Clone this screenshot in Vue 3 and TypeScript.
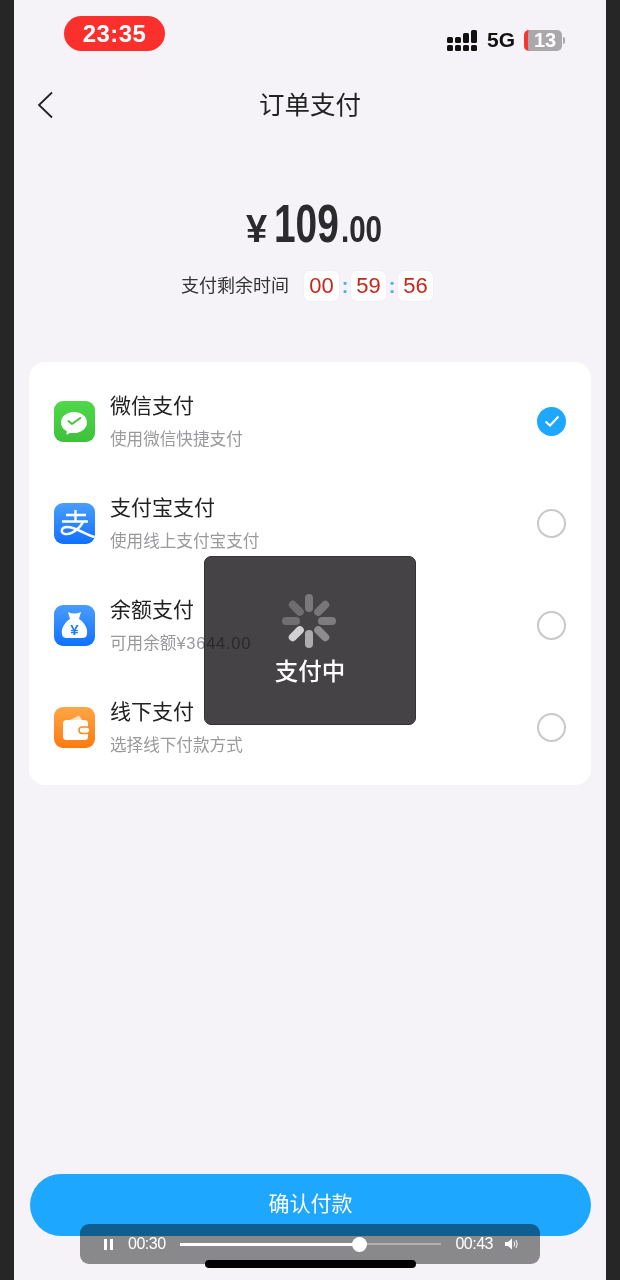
<script setup lang="ts">
const spokes = [
  { angle: 0, color: '#7a787a' },
  { angle: 45, color: '#787678' },
  { angle: 90, color: '#7e7c7e' },
  { angle: 135, color: '#8e8c8e' },
  { angle: 180, color: '#aeacae' },
  { angle: 225, color: '#d2d0d2' },
  { angle: 270, color: '#716f71' },
  { angle: 315, color: '#6f6d6f' },
];

const methods = [
  { key: 'wechat', name: '微信支付', desc: '使用微信快捷支付', extra: '', checked: true },
  { key: 'alipay', name: '支付宝支付', desc: '使用线上支付宝支付', extra: '', checked: false },
  { key: 'balance', name: '余额支付', desc: '可用余额', extra: '¥3644.00', checked: false },
  { key: 'offline', name: '线下支付', desc: '选择线下付款方式', extra: '', checked: false },
];
</script>

<template>
  <div class="frame">
    <div class="status">
      <div class="clock">23:35</div>
      <div class="status-right">
        <svg class="signal" width="30" height="21" viewBox="0 0 30 21">
          <rect x="0" y="7" width="6" height="6" rx="1.500" />
          <rect x="0" y="15" width="6" height="6" rx="1.500" />
          <rect x="8" y="7" width="6" height="6" rx="1.500" />
          <rect x="8" y="15" width="6" height="6" rx="1.500" />
          <rect x="16" y="3" width="6" height="10" rx="1.500" />
          <rect x="16" y="15" width="6" height="6" rx="1.500" />
          <rect x="24" y="0" width="6" height="13" rx="1.500" />
          <rect x="24" y="15" width="6" height="6" rx="1.500" />
        </svg>
        <span class="net">5G</span>
        <div class="battery">
          <div class="battery-body">13</div>
          <i class="battery-nub"></i>
        </div>
      </div>
    </div>

    <div class="nav">
      <svg class="back" width="16" height="28" viewBox="0 0 16 28">
        <path d="M15 1.500 2 14l13 12.500" fill="none" stroke="#222" stroke-width="1.800" />
      </svg>
      <h1>订单支付</h1>
    </div>

    <div class="amount">
      <span class="yen">¥</span><span class="whole">109</span><span class="cents">.00</span>
    </div>

    <div class="countdown">
      <span class="countdown-label">支付剩余时间</span>
      <span class="cell">00</span>
      <span class="colon">:</span>
      <span class="cell">59</span>
      <span class="colon">:</span>
      <span class="cell">56</span>
    </div>

    <div class="card">
      <div v-for="m in methods" :key="m.key" class="row">
        <div class="pay-icon" :class="m.key">
          <svg v-if="m.key === 'wechat'" width="41" height="41" viewBox="0 0 41 41">
            <ellipse cx="20" cy="21.500" rx="13" ry="10.500" fill="#fff" />
            <path d="M13 28 12.500 34l6.500-4z" fill="#fff" />
            <path d="M14 19.500l4 3.500 9-6.500" fill="none" stroke="#41c83d" stroke-width="2" />
          </svg>
          <svg v-else-if="m.key === 'alipay'" width="41" height="41" viewBox="0 0 41 41">
            <g fill="none" stroke="#fff" stroke-width="2.400">
              <path d="M12 12H32M21.500 7V19M8 18.500H34" />
              <path d="M29 19C25 27 16 32 11 31 6 30 7 24 13 24 22 24 32 32 41 34" />
            </g>
          </svg>
          <svg v-else-if="m.key === 'balance'" width="41" height="41" viewBox="0 0 41 41">
            <path d="M14 7Q20 10 27 7L25 14C31 18 34 24 33 29Q33 33 28 33H13Q8 33 8 29C7 24 10 18 16 14Z" fill="#fff" />
            <text x="20.500" y="30" text-anchor="middle" class="bag-yen">¥</text>
          </svg>
          <svg v-else width="41" height="41" viewBox="0 0 41 41">
            <path d="M16 13 25 8.500 28 13Z" fill="#ffe3c4" />
            <rect x="9" y="13" width="25" height="20" rx="3.500" fill="#fff" />
            <rect x="25" y="20" width="11" height="6.500" rx="3.200" fill="#fff" stroke="#ff8a24" stroke-width="1.500" />
          </svg>
        </div>
        <div class="row-text">
          <div class="row-name">{{ m.name }}</div>
          <div class="row-desc">{{ m.desc }}<span v-if="m.extra" class="row-extra">{{ m.extra }}</span></div>
        </div>
        <div class="radio" :class="{ checked: m.checked }">
          <svg v-if="m.checked" width="28" height="28" viewBox="0 0 28 28">
            <path d="M7.500 14.500l4.500 4 8.500-9" fill="none" stroke="#fff" stroke-width="2" />
          </svg>
        </div>
      </div>
    </div>

    <div class="footer">
      <button class="confirm">确认付款</button>
    </div>

    <div class="toast">
      <div class="spinner">
        <i
          v-for="s in spokes"
          :key="s.angle"
          :style="{ transform: `rotate(${s.angle}deg)`, '--spoke': s.color }"
        ></i>
      </div>
      <div class="toast-text">支付中</div>
    </div>

    <div class="player">
      <svg width="9" height="11" viewBox="0 0 9 11" fill="#fff">
        <rect x="0" y="0" width="3" height="11" />
        <rect x="6" y="0" width="3" height="11" />
      </svg>
      <span class="time">00:30</span>
      <div class="track">
        <div class="track-fill"></div>
        <div class="track-knob"></div>
      </div>
      <span class="time">00:43</span>
      <svg width="14" height="12" viewBox="0 0 14 12">
        <path d="M0 4h3l4-3.500v11L3 8H0z" fill="#fff" />
        <path d="M9 3.500q1.500 2.500 0 5M11 2q2.500 4 0 8" fill="none" stroke="#fff" stroke-width="1" />
      </svg>
    </div>

    <div class="home-bar"></div>
  </div>
</template>

<style scoped>
.frame {
  position: relative;
  box-sizing: border-box;
  width: 592px;
  height: 1280px;
  margin: 0 14px;
  background: #f5f3f7;
  display: flex;
  flex-direction: column;
  font-family: "Liberation Sans", "Noto Sans CJK SC", sans-serif;
  color: #222;
}

.status {
  height: 70px;
  box-sizing: border-box;
  padding: 16px 41px 0 50px;
  display: flex;
  justify-content: space-between;
  align-items: flex-start;
}

.clock {
  width: 101px;
  height: 35px;
  border-radius: 18px;
  background: #fb2f2c;
  color: #fff;
  font-size: 24px;
  font-weight: 700;
  letter-spacing: 0.4px;
  line-height: 35px;
  text-align: center;
}

.status-right {
  display: flex;
  align-items: center;
  margin-top: 12px;
}

.signal {
  fill: #111;
}

.net {
  margin-left: 10px;
  font-size: 21px;
  font-weight: 700;
  line-height: 24px;
  color: #111;
}

.battery {
  margin-left: 9px;
  display: flex;
  align-items: center;
}

.battery-body {
  box-sizing: border-box;
  width: 38px;
  height: 21px;
  border-radius: 5px;
  border-left: 4px solid #f5352f;
  background: #aaa8ab;
  color: #fff;
  font-size: 20px;
  font-weight: 700;
  line-height: 21px;
  text-align: center;
}

.battery-nub {
  width: 2px;
  height: 7px;
  margin-left: 1px;
  border-radius: 0 2px 2px 0;
  background: #aaa8ab;
}

.nav {
  height: 70px;
  position: relative;
  display: flex;
  align-items: center;
  justify-content: center;
}

.nav h1 {
  margin: 0;
  font-size: 25.500px;
  font-weight: 400;
  line-height: 70px;
}

.back {
  position: absolute;
  left: 23px;
  top: 21px;
}

.amount {
  margin-top: 50px;
  height: 66px;
  display: flex;
  align-items: baseline;
  justify-content: center;
  padding-left: 8px;
  font-weight: 700;
  color: #2b2b2d;
  line-height: 66px;
}

.yen {
  font-size: 38px;
  margin-right: 7px;
}

.whole,
.cents {
  display: inline-block;
  white-space: nowrap;
  transform-origin: left center;
}

.whole {
  width: 65px;
  font-size: 54px;
  transform: scaleX(0.72);
}

.cents {
  width: 41px;
  margin-left: 2px;
  font-size: 36px;
  transform: scaleX(0.82);
}

.countdown {
  margin-top: 15px;
  height: 30px;
  padding-right: 6px;
  display: flex;
  align-items: center;
  justify-content: center;
}

.countdown-label {
  font-size: 18px;
  line-height: 28px;
  margin-top: -1px;
  margin-right: 15px;
  color: #333;
}

.cell {
  width: 35px;
  height: 30px;
  border-radius: 6px;
  background: #fff;
  box-shadow: 0 0 2px rgba(0, 0, 0, 0.07);
  color: #c6261c;
  font-size: 22px;
  line-height: 30px;
  text-align: center;
}

.colon {
  width: 12px;
  color: #45b2ec;
  font-size: 20px;
  font-weight: 700;
  line-height: 28px;
  text-align: center;
}

.card {
  margin: 61px 15px 0;
  padding: 8px 25px 7px;
  background: #fff;
  border-radius: 16px;
}

.row {
  height: 102px;
  display: flex;
  align-items: center;
}

.pay-icon {
  width: 41px;
  height: 41px;
  border-radius: 9px;
  overflow: hidden;
  flex: none;
}

.pay-icon svg {
  display: block;
}

.wechat {
  background: linear-gradient(#4fd848, #3dc23b);
}

.alipay,
.balance {
  background: linear-gradient(#4a9dff, #0f71ff);
}

.offline {
  background: linear-gradient(#ffa646, #ff7a10);
}

.bag-yen {
  fill: #1f7fff;
  font-size: 15px;
  font-weight: 700;
}

.row-text {
  flex: 1;
  margin-left: 15px;
  padding-top: 4px;
}

.row-name {
  font-size: 21px;
  line-height: 30px;
  margin-top: -3px;
  color: #222;
}

.row-desc {
  font-size: 16.600px;
  line-height: 24px;
  margin-top: 7px;
  color: #9a999c;
  white-space: nowrap;
}

.row-extra {
  letter-spacing: 0.7px;
}

.radio {
  box-sizing: border-box;
  width: 29px;
  height: 29px;
  border-radius: 50%;
  border: 2px solid #c9c8ca;
  flex: none;
}

.radio.checked {
  border: none;
  background: #1ea7ff;
}

.radio svg {
  display: block;
  margin: 0.5px;
}

.footer {
  margin-top: auto;
  padding: 0 15px 44px 16px;
}

.confirm {
  display: block;
  width: 100%;
  height: 62px;
  padding: 0 0 6px;
  border: none;
  border-radius: 31px;
  background: #1ea7ff;
  color: #fff;
  font-family: inherit;
  font-size: 21px;
}

/* the darkening layer multiplies, so the text underneath stays faintly visible */
.toast {
  position: absolute;
  left: 190px;
  top: 556px;
  width: 212px;
  height: 169px;
  display: flex;
  flex-direction: column;
  align-items: center;
}

.toast::before {
  content: "";
  position: absolute;
  inset: 0;
  box-sizing: border-box;
  border-radius: 7px;
  border: 1px solid #343234;
  background: #464346;
  mix-blend-mode: multiply;
}

.spinner {
  position: relative;
  width: 54px;
  height: 54px;
  margin: 38px 2px 0 0;
}

.spinner i {
  position: absolute;
  left: 23px;
  top: 0;
  width: 8px;
  height: 54px;
}

.spinner i::before {
  content: "";
  display: block;
  width: 8px;
  height: 18px;
  border-radius: 4px;
  background: var(--spoke);
}

.toast-text {
  position: relative;
  margin-top: 7px;
  color: #fff;
  font-size: 23.500px;
  font-weight: 500;
  line-height: 34px;
}

.player {
  position: absolute;
  left: 66px;
  top: 1224px;
  box-sizing: border-box;
  width: 460px;
  height: 40px;
  padding: 0 21px 0 24px;
  border-radius: 9px;
  background: rgba(0, 0, 0, 0.44);
  display: flex;
  align-items: center;
  color: #fff;
}

.time {
  font-size: 16px;
  letter-spacing: -0.5px;
  margin-left: 15px;
}

.track {
  position: relative;
  width: 262px;
  height: 2px;
  margin-left: 14px;
  background: rgba(255, 255, 255, 0.35);
}

.track-fill {
  width: 180px;
  height: 3px;
  margin-top: -0.5px;
  background: #fff;
}

.track-knob {
  position: absolute;
  left: 172.500px;
  top: -6.500px;
  width: 15px;
  height: 15px;
  border-radius: 50%;
  background: #fff;
}

.player .track + .time {
  margin-left: 14px;
  margin-right: 12px;
}

.home-bar {
  position: absolute;
  left: 191px;
  top: 1260px;
  width: 211px;
  height: 8px;
  border-radius: 4px;
  background: #000;
}
</style>

<style>
html,
body {
  margin: 0;
  background: #262626;
  overflow: hidden;
}
</style>
